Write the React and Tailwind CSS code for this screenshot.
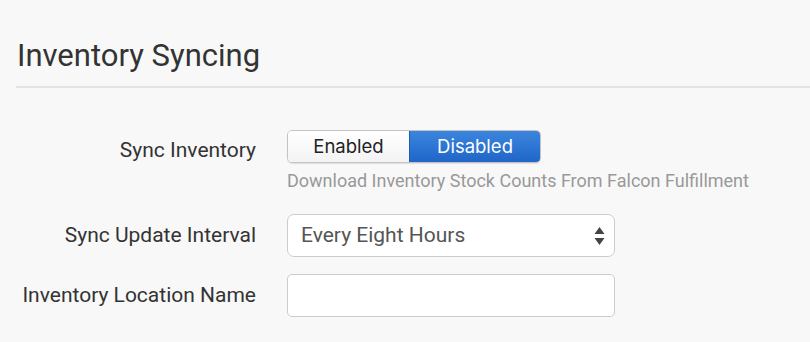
export default function App() {
  return (
    <div className="w-[810px] h-[342px] bg-[#f8f8f8] overflow-hidden" style={{ fontFamily: "Roboto, 'Liberation Sans', sans-serif" }}>
      <div className="pl-[16px] pt-[37px]">
        <h1 className="text-[31px] leading-[38px] text-[#333] pl-[1px]">Inventory Syncing</h1>
        <div className="mt-[11px] h-[2px] bg-[#e3e3e3]" />
      </div>
      <div className="mt-[42px] flex flex-col">
        <div className="flex items-start">
          <div className="w-[256px] text-right text-[21px] leading-[33px] text-[#333] pt-[4px]">Sync Inventory</div>
          <div className="ml-[31px] flex flex-col">
            <div className="flex h-[33px] w-[254px] rounded-[5px] overflow-hidden border border-[#c4c4c4] shadow-[0_1px_1px_rgba(0,0,0,0.1)]" style={{ fontFamily: "Inter, 'Liberation Sans', sans-serif" }}>
              <div className="w-[121px] flex items-center justify-center bg-gradient-to-b from-white to-[#f3f3f3] text-[#222] text-[18.5px]">Enabled</div>
              <div className="flex-1 flex items-center justify-center bg-gradient-to-b from-[#3b85de] to-[#1f66c8] text-white text-[18.5px] border-l border-[#1c5cb5]">Disabled</div>
            </div>
            <div className="mt-[8px] text-[18px] leading-[20px] text-[#999] whitespace-nowrap">Download Inventory Stock Counts From Falcon Fulfillment</div>
          </div>
        </div>
        <div className="flex items-center mt-[23px]">
          <div className="w-[256px] text-right text-[21px] text-[#333]">Sync Update Interval</div>
          <div className="ml-[31px] w-[328px] h-[43px] rounded-[7px] border border-[#cccccc] bg-white flex items-center justify-between pl-[13px] pr-[9px]">
            <span className="text-[21px] text-[#555]">Every Eight Hours</span>
            <svg width="11" height="20" viewBox="0 0 11 20">
              <path d="M5.5 1 L10.5 8 H0.5 Z" fill="#444" />
              <path d="M5.5 19 L10.5 12 H0.5 Z" fill="#444" />
            </svg>
          </div>
        </div>
        <div className="flex items-center mt-[17px]">
          <div className="w-[256px] text-right text-[21px] text-[#333]">Inventory Location Name</div>
          <div className="ml-[31px] w-[328px] h-[43px] rounded-[5px] border border-[#cccccc] bg-white" />
        </div>
      </div>
    </div>
  );
}
